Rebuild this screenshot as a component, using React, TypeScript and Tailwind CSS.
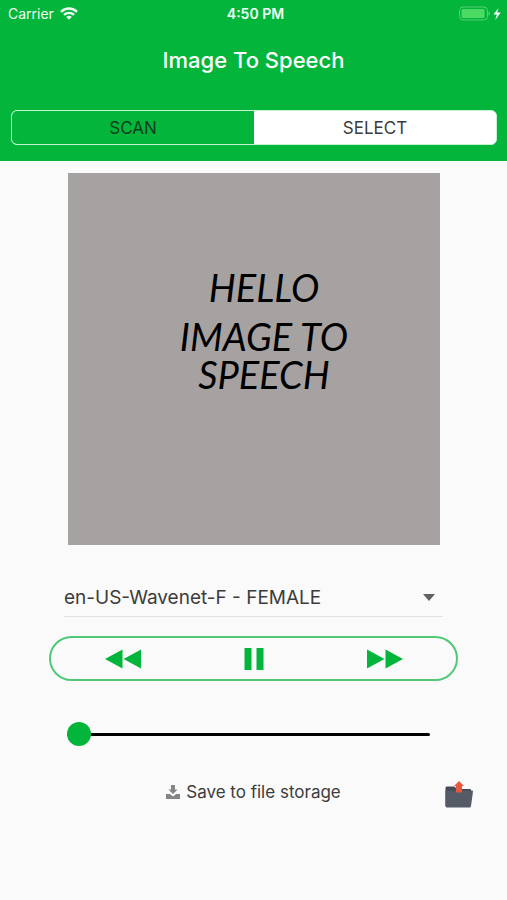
import { useState } from "react";

function StatusBar() {
  return (
    <div className="grid h-7 grid-cols-3 items-center px-2 text-sm text-green-50">
      <div className="flex items-center gap-1.5">
        <span>Carrier</span>
        <svg viewBox="0 0 18 13" className="mb-0.5 h-[13px] w-[18px]" aria-hidden="true">
          <g fill="none" stroke="currentColor" strokeWidth="2.4">
            <path d="M1 4.8a11.3 11.3 0 0 1 16 0" />
            <path d="M4 7.9a7.1 7.1 0 0 1 10 0" />
          </g>
          <path d="M6.2 10a4 4 0 0 1 5.6 0L9 12.8Z" fill="currentColor" />
        </svg>
      </div>
      <span className="pl-1 text-center font-semibold">4:50 PM</span>
      <div className="flex items-center justify-end">
        <svg viewBox="0 0 44 15" className="-mr-1 mb-0.5 h-[15px] w-11" aria-hidden="true">
          <rect x="0.5" y="1" width="28" height="13" rx="3.5" fill="none" stroke="#58cd77" />
          <rect x="2.5" y="3" width="23" height="9" rx="1.5" fill="#4cd964" />
          <path d="M29.500 5.500c2 .6 2 3.400 0 4Z" fill="#58cd77" />
          <path d="M39.500 2 34.500 8.500h3.300l-1.600 5.500 5.500-7.400h-3.600Z" fill="#fff" />
        </svg>
      </div>
    </div>
  );
}

const modes = ["SCAN", "SELECT"];

export default function App() {
  const [mode, setMode] = useState("SCAN");
  const [position, setPosition] = useState(0);

  return (
    <div className="min-h-screen bg-[#fafafa] font-['Inter','Liberation_Sans',sans-serif] text-[#3c3c3c]">
      <header className="bg-[#03b53b] pb-4">
        <StatusBar />
        <h1 className="pt-4 pb-[34px] text-center text-[22px] leading-8 font-medium text-white">
          Image To Speech
        </h1>
        <div className="mr-2.5 ml-[11px] flex h-[35px] overflow-hidden rounded-md border border-[#c5f3d1] bg-white">
          {modes.map((name) => (
            <button
              key={name}
              type="button"
              aria-pressed={mode === name}
              onClick={() => setMode(name)}
              className={
                mode === name
                  ? "flex-1 bg-[#03b53b] text-[17px] leading-8 text-[#0d3f1b]"
                  : "flex-1 bg-white text-[17px] leading-8 text-[#3c3c3c]"
              }
            >
              {name}
            </button>
          ))}
        </div>
      </header>

      <main className="pt-3">
        <div className="mr-[67px] ml-[68px] aspect-square bg-[#a6a2a1] pt-[88px] pl-5 text-center font-['Lato','Liberation_Sans',sans-serif] text-[38px] text-black italic">
          <p className="leading-[52px]">HELLO</p>
          <p className="pt-1 leading-[38px]">
            IMAGE TO
            <br />
            SPEECH
          </p>
        </div>

        <div className="relative mx-16 mt-8 border-b border-[#e2e2e2]">
          <select
            aria-label="Voice"
            className="h-[39px] w-full appearance-none bg-transparent pt-1 text-[19px] outline-none"
          >
            <option>en-US-Wavenet-F - FEMALE</option>
          </select>
          <svg
            viewBox="0 0 12 7"
            className="pointer-events-none absolute top-[17px] right-2 h-[7px] w-3"
            aria-hidden="true"
          >
            <path d="M0 0h12L6 7Z" fill="#616161" />
          </svg>
        </div>

        <div className="mx-[49px] mt-[19px] grid h-[45px] grid-cols-3 rounded-full border-2 border-[#4fc978] px-1.5 text-[#03b53b]">
          <button type="button" aria-label="Rewind" className="flex items-center justify-center">
            <svg viewBox="0 0 36 20" className="h-5 w-9" fill="currentColor" aria-hidden="true">
              <path d="M0 10 17.500.500v19ZM18.500 10 36 .500v19Z" />
            </svg>
          </button>
          <button type="button" aria-label="Pause" className="flex items-center justify-center">
            <svg viewBox="0 0 20 22" className="h-[22px] w-5" fill="currentColor" aria-hidden="true">
              <path d="M0.500 0h7v22h-7ZM12.500 0h7v22h-7Z" />
            </svg>
          </button>
          <button type="button" aria-label="Fast forward" className="flex items-center justify-center">
            <svg viewBox="0 0 36 20" className="h-5 w-9" fill="currentColor" aria-hidden="true">
              <path d="M0 .500 17.500 10 0 19.500ZM18.500.500 36 10l-17.500 9.500Z" />
            </svg>
          </button>
        </div>

        <div className="mr-[77px] ml-[67px] pt-[41px]">
          <input
            type="range"
            aria-label="Playback position"
            min={0}
            max={100}
            value={position}
            onChange={(e) => setPosition(Number(e.target.value))}
            className="block h-6 w-full appearance-none bg-transparent outline-none [&::-webkit-slider-runnable-track]:h-[3px] [&::-webkit-slider-runnable-track]:rounded-full [&::-webkit-slider-runnable-track]:bg-black [&::-webkit-slider-thumb]:-mt-[11px] [&::-webkit-slider-thumb]:size-6 [&::-webkit-slider-thumb]:appearance-none [&::-webkit-slider-thumb]:rounded-full [&::-webkit-slider-thumb]:bg-[#03b53b]"
          />
        </div>

        <div className="mt-[31px] grid grid-cols-[1fr_auto_1fr] items-start px-[34px]">
          <button type="button" className="col-start-2 flex items-center gap-1.5 pt-[3px] text-[17px] leading-6">
            <svg viewBox="0 0 14 14" className="size-3.5" fill="#858585" aria-hidden="true">
              <path d="M5 0h4v4.500h2.500L7 9 2.500 4.500H5Z" />
              <path d="M0 9h3.800L7 11.500 10.200 9H14v5H0Z" />
            </svg>
            Save to file storage
          </button>
          <button type="button" aria-label="Open saved files" className="mt-1 justify-self-end">
            <svg viewBox="0 0 28 27" className="h-[27px] w-7" aria-hidden="true">
              <path d="M.5 7q0-1.500 1-1.500h8L12 8h13q1 0 1 1v16H.5Z" fill="#454b55" />
              <path d="M.5 9.500H27q1 0 1 1l-2 14.500q-.2 1.500-1.500 1.500H2Q.5 26.500.5 25Z" fill="#545a66" />
              <path d="M14 0 9 5h2v6.500h6V5h2Z" fill="#e9573d" />
            </svg>
          </button>
        </div>
      </main>
    </div>
  );
}
